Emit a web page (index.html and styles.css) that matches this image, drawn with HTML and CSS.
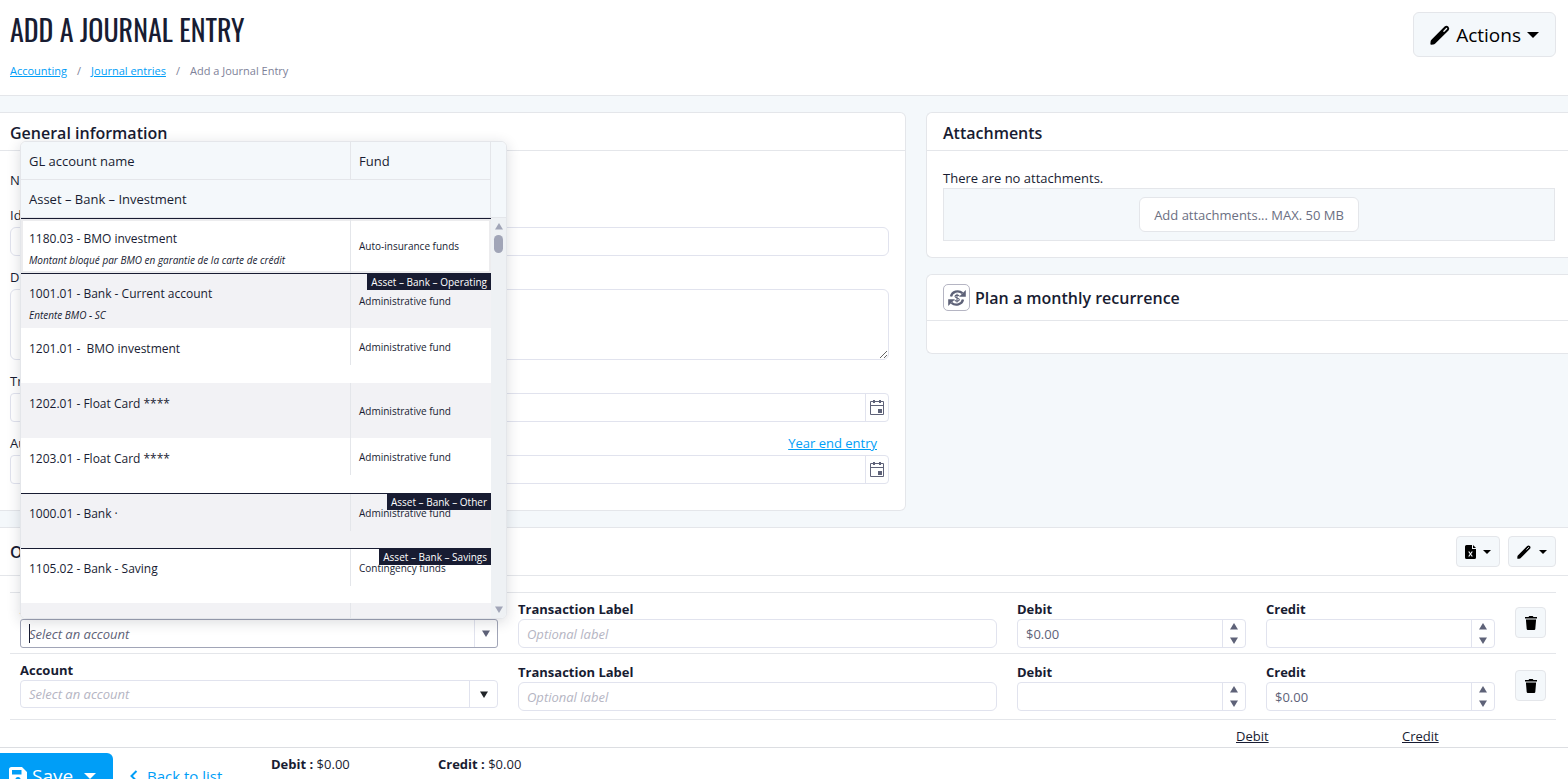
FILE: index.html
```html
<!DOCTYPE html>
<html lang="en">
<head>
<meta charset="utf-8">
<title>Add a Journal Entry</title>
<link rel="stylesheet" href="styles.css">
</head>
<body>
<svg class="sprite" aria-hidden="true">
  <symbol id="i-pen" viewBox="0 0 20 20"><path d="M1.200 15 14.600 1.600Q16.500 0 18.200 1.500L18.600 1.900Q20 3.600 18.500 5.400L5 18.800Q4.300 19.500 3.300 19.500L1.200 19.700Q.300 19.700.400 18.800L.600 16.500Q.600 15.700 1.200 15Z" fill="currentColor"/><path d="M13.900 6.200 16.600 3.500" stroke="#f4f8fb" stroke-width="1.300" stroke-linecap="round"/></symbol>
  <symbol id="i-down" viewBox="0 0 12 6"><path d="M0 0h12L6 6z" fill="currentColor"/></symbol>
  <symbol id="i-tri-down" viewBox="0 0 8 7"><path d="M0 .500h8L4 7z" fill="currentColor"/></symbol>
  <symbol id="i-tri-up" viewBox="0 0 8 7"><path d="M0 6.500h8L4 0z" fill="currentColor"/></symbol>
  <symbol id="i-trash" viewBox="0 0 12 14"><path d="M0 1h3.5L4.3 0h3.4l.8 1H12v1.5H0zM.9 3.4h10.2l-.8 9.6q-.1 1-1.100 1H2.800q-1 0-1.100-1z" fill="currentColor"/></symbol>
  <symbol id="i-cal" viewBox="0 0 16 16"><path d="M1.500 1.500h13v13h-13zM1.500 5.500h13" fill="none" stroke="currentColor"/><path d="M4 0h2v3H4zM10 0h2v3h-2zM9 9h4v4H9z" fill="currentColor"/></symbol>
  <symbol id="i-file" viewBox="0 0 11 14"><path d="M1.500 0H7v4h4v8.500q0 1.500-1.500 1.500h-8Q0 14 0 12.500v-11Q0 0 1.500 0z" fill="currentColor"/><path d="M8 0v3h3z" fill="currentColor"/><path d="m3.700 6.500 3.600 5M7.300 6.500l-3.600 5" stroke="#f4f8fb" stroke-width="1.200"/></symbol>
  <symbol id="i-save" viewBox="0 0 18 18"><path fill-rule="evenodd" d="M2.500 0H13l5 5v10.500q0 2.500-2.500 2.500h-13Q0 18 0 15.500v-13Q0 0 2.500 0zM3 3v4.500h9.500V3zM9 10a2.600 2.600 0 1 0 .01 0z" fill="currentColor"/></symbol>
  <symbol id="i-cycle" viewBox="0 0 18 18"><path d="M3 7.500C4 2.500 10.500.800 14.500 4.200M15 10.500c-1 5-7.500 6.700-11.500 3.300" fill="none" stroke="currentColor" stroke-width="2.300"/><path d="M17.800 1v6.700H11zM.200 17v-6.700H7z" fill="currentColor"/><path d="M11.300 7C10.200 5.700 7 5.800 7 7.500s4.300 1.200 4.300 3.100-3.200 2-4.600.5M9 4.700v8.700" fill="none" stroke="currentColor" stroke-width="1.100"/></symbol>
</svg>

<header class="page-head">
  <div>
    <h1 class="title">ADD A JOURNAL ENTRY</h1>
    <nav class="crumbs" aria-label="Breadcrumb">
      <a href="#">Accounting</a><span>/</span><a href="#">Journal entries</a><span>/</span><span>Add a Journal Entry</span>
    </nav>
  </div>
  <button class="btn btn-large" type="button"><svg class="ic20"><use href="#i-pen"/></svg>Actions<svg class="caret-lg"><use href="#i-down"/></svg></button>
</header>

<main>
  <div class="columns">
    <section class="card card-left">
      <h2 class="card-title">General information</h2>
      <div class="card-body form">
        <p class="line">Number</p>
        <div class="field"><label for="ident">Identifier</label><input class="box" id="ident" type="text"></div>
        <div class="field"><label for="desc">Description</label><textarea class="box area" id="desc"></textarea></div>
        <div class="field"><label for="tdate">Transaction date</label>
          <div class="box group"><input id="tdate" type="text"><button type="button" aria-label="Open calendar"><svg class="ic16"><use href="#i-cal"/></svg></button></div></div>
        <div class="field"><div class="label-row"><label for="adate">Authorization date</label><a href="#">Year end entry</a></div>
          <div class="box group"><input id="adate" type="text"><button type="button" aria-label="Open calendar"><svg class="ic16"><use href="#i-cal"/></svg></button></div></div>
      </div>
    </section>
    <div class="side">
      <section class="card card-right">
        <h2 class="card-title">Attachments</h2>
        <div class="card-body attach">
          <p class="line">There are no attachments.</p>
          <div class="drop"><button class="upload" type="button">Add attachments... MAX. 50 MB</button></div>
        </div>
      </section>
      <section class="card card-right">
        <h2 class="card-title tall"><button class="cycle" type="button" aria-label="Toggle recurrence"><svg class="ic18"><use href="#i-cycle"/></svg></button>Plan a monthly recurrence</h2>
        <div class="empty"></div>
      </section>
    </div>
  </div>

  <section class="ops">
    <div class="ops-head">
      <h2>Operations</h2>
      <div class="tools">
        <button class="btn btn-small" type="button" aria-label="Export"><svg class="ic-file"><use href="#i-file"/></svg><svg class="caret-sm"><use href="#i-down"/></svg></button>
        <button class="btn btn-small" type="button" aria-label="Edit"><svg class="ic14"><use href="#i-pen"/></svg><svg class="caret-sm wide"><use href="#i-down"/></svg></button>
      </div>
    </div>
    <div class="entries">
      <div class="entry">
        <div class="field account">
          <label for="acc1">Account</label>
          <div class="box group focused"><input id="acc1" type="text" placeholder="Select an account"><button type="button" aria-label="Show accounts"><svg class="tri"><use href="#i-tri-down"/></svg></button><span class="text-caret"></span></div>
          <div class="popup">
            <div class="popup-head">
              <div class="head-cells">
                <div class="head-row"><span>GL account name</span><span>Fund</span></div>
                <div class="head-group">Asset – Bank – Investment</div>
              </div>
            </div>
            <div class="popup-body">
              <ul class="options">
                <li class="opt start active"><div class="name">1180.03 - BMO investment<em>Montant bloqué par BMO en garantie de la carte de crédit</em></div><div class="fund">Auto-insurance funds</div></li>
                <li class="opt start alt"><div class="name">1001.01 - Bank - Current account<em>Entente BMO - SC</em></div><div class="fund">Administrative fund</div><b class="tag">Asset – Bank – Operating</b></li>
                <li class="opt"><div class="name">1201.01 -&nbsp; BMO investment</div><div class="fund short">Administrative fund</div></li>
                <li class="opt alt"><div class="name">1202.01 - Float Card ****</div><div class="fund">Administrative fund</div></li>
                <li class="opt"><div class="name">1203.01 - Float Card ****</div><div class="fund short">Administrative fund</div></li>
                <li class="opt start alt"><div class="name">1000.01 - Bank ·</div><div class="fund short">Administrative fund</div><b class="tag">Asset – Bank – Other</b></li>
                <li class="opt start"><div class="name">1105.02 - Bank - Saving</div><div class="fund short">Contingency funds</div><b class="tag">Asset – Bank – Savings</b></li>
                <li class="opt alt"><div class="name"></div><div class="fund"></div></li>
              </ul>
              <div class="scrollbar"><svg class="tri"><use href="#i-tri-up"/></svg><span class="thumb"></span><svg class="tri last"><use href="#i-tri-down"/></svg></div>
            </div>
          </div>
        </div>
        <div class="field"><label for="lab1">Transaction Label</label><input class="box" id="lab1" type="text" placeholder="Optional label"></div>
        <div class="field"><label for="deb1">Debit</label><div class="box group"><input id="deb1" type="text" value="$0.00"><div class="spin"><button type="button" aria-label="Increase"><svg class="tri"><use href="#i-tri-up"/></svg></button><button type="button" aria-label="Decrease"><svg class="tri"><use href="#i-tri-down"/></svg></button></div></div></div>
        <div class="field"><label for="cre1">Credit</label><div class="box group"><input id="cre1" type="text"><div class="spin"><button type="button" aria-label="Increase"><svg class="tri"><use href="#i-tri-up"/></svg></button><button type="button" aria-label="Decrease"><svg class="tri"><use href="#i-tri-down"/></svg></button></div></div></div>
        <button class="btn trash" type="button" aria-label="Delete line"><svg class="ic-trash"><use href="#i-trash"/></svg></button>
      </div>
      <div class="entry second">
        <div class="field account">
          <label for="acc2">Account</label>
          <div class="box group plain"><input id="acc2" type="text" placeholder="Select an account"><button type="button" aria-label="Show accounts"><svg class="tri"><use href="#i-tri-down"/></svg></button></div>
        </div>
        <div class="field"><label for="lab2">Transaction Label</label><input class="box" id="lab2" type="text" placeholder="Optional label"></div>
        <div class="field"><label for="deb2">Debit</label><div class="box group"><input id="deb2" type="text"><div class="spin"><button type="button" aria-label="Increase"><svg class="tri"><use href="#i-tri-up"/></svg></button><button type="button" aria-label="Decrease"><svg class="tri"><use href="#i-tri-down"/></svg></button></div></div></div>
        <div class="field"><label for="cre2">Credit</label><div class="box group"><input id="cre2" type="text" value="$0.00"><div class="spin"><button type="button" aria-label="Increase"><svg class="tri"><use href="#i-tri-up"/></svg></button><button type="button" aria-label="Decrease"><svg class="tri"><use href="#i-tri-down"/></svg></button></div></div></div>
        <button class="btn trash" type="button" aria-label="Delete line"><svg class="ic-trash"><use href="#i-trash"/></svg></button>
      </div>
      <div class="totals-head"><u>Debit</u><u>Credit</u></div>
    </div>
  </section>
</main>

<footer class="bar">
  <button class="save" type="button"><svg class="ic18"><use href="#i-save"/></svg>Save<svg class="caret-lg"><use href="#i-down"/></svg></button>
  <a class="back" href="#"><svg class="chev" viewBox="0 0 8 12"><path d="M6.500 1 1.500 6l5 5" fill="none" stroke="currentColor" stroke-width="2"/></svg>Back to list</a>
  <p class="sum"><b>Debit :</b> $0.00</p>
  <p class="sum"><b>Credit :</b> $0.00</p>
</footer>
</body>
</html>
```
FILE: styles.css
```css
* { box-sizing: border-box; }
html, body { height: 100%; overflow: hidden; }
body {
  margin: 0;
  background: #f4f8fb;
  color: #181c32;
  font: 13px/20px "Open Sans", "Noto Sans", sans-serif;
}
h1, h2, p, ul { margin: 0; padding: 0; }
button, input, textarea { font: inherit; color: inherit; }
button { cursor: pointer; padding: 0; }
svg { display: block; flex: none; }
a { color: #009ef7; }
.sprite { position: absolute; width: 0; height: 0; }

.ic20 { width: 20px; height: 20px; }
.ic18 { width: 18px; height: 18px; }
.ic16 { width: 16px; height: 16px; }
.ic14 { width: 14px; height: 14px; }
.ic-file { width: 11px; height: 14px; }
.ic-trash { width: 12px; height: 14px; }
.caret-lg { width: 12px; height: 6px; }
.caret-sm { width: 8px; height: 4px; }
.tri { width: 8px; height: 7px; }

/* page header */
.page-head {
  display: flex;
  justify-content: space-between;
  align-items: flex-start;
  padding: 12px 12px 14px 10px;
  background: #fff;
  border-bottom: 1px solid #e4e6ea;
}
.title {
  font: 400 28px/36px Oswald, "Open Sans Condensed", "Noto Sans ExtraCondensed", "Roboto Condensed", "Liberation Sans Narrow", "Open Sans", sans-serif;
}
.crumbs {
  display: flex;
  gap: 10px;
  margin-top: 12px;
  font-size: 11px;
  line-height: 21px;
  color: #7e8299;
}
.btn {
  display: flex;
  align-items: center;
  justify-content: center;
  background: #f4f8fb;
  border: 1px solid #e4e6ea;
  border-radius: 4px;
  color: #000;
}
.btn-large { gap: 6px; height: 45px; padding: 0 16px; font-size: 19px; border-radius: 6px; }

/* cards */
.columns {
  display: grid;
  grid-template-columns: 906fr 642fr;
  gap: 20px;
  padding: 16px 0;
}
.card { background: #fff; border: 1px solid #e4e6ea; border-radius: 6px; }
.card-left { border-left: 0; border-radius: 0 6px 6px 0; }
.card-right { border-right: 0; border-radius: 6px 0 0 6px; }
.card-title {
  display: flex;
  align-items: center;
  gap: 5px;
  height: 38px;
  padding: 2px 16px 0;
  border-bottom: 1px solid #e4e6ea;
  font-size: 16px;
  font-weight: 600;
}
.card-left .card-title { padding: 2px 10px 0; }
.card-title.tall { height: 46px; padding-top: 0; }
.side { display: flex; flex-direction: column; gap: 16px; }
.form { display: flex; flex-direction: column; gap: 11px; padding: 19px 16px 26px 10px; }
.form > .line { margin-bottom: 4px; }
.field { display: flex; flex-direction: column; gap: 2px; }
.label-row { display: flex; justify-content: space-between; padding-right: 12px; }
.box {
  width: 100%;
  height: 29px;
  padding: 0 8px;
  background: #fff;
  border: 1px solid #e1e3ee;
  border-radius: 6px;
  outline: 0;
}
.area { display: block; height: 71px; resize: vertical; }
.group { position: relative; display: flex; padding: 0; border-radius: 4px; overflow: hidden; }
.group input { flex: 1; min-width: 0; border: 0; padding: 0 8px; background: none; outline: 0; color: #5e6278; }
.group button {
  display: flex;
  align-items: center;
  justify-content: center;
  width: 23px;
  border: 0;
  border-left: 1px solid #e1e3ee;
  background: none;
  color: #5e6278;
}
::placeholder { color: #b5b5c3; font-style: italic; opacity: 1; }

.attach { padding: 17px 13px 16px 16px; }
.drop {
  display: flex;
  justify-content: center;
  padding: 8px;
  background: #f4f8fb;
  border: 1px solid #e4e6ea;
}
.upload { height: 35px; padding: 0 14px; background: #fff; border: 1px solid #e4e6ea; border-radius: 6px; color: #6b6f82; }
.cycle {
  display: flex;
  align-items: center;
  justify-content: center;
  width: 27px;
  height: 27px;
  background: #fff;
  border: 1px solid #b5b5c3;
  border-radius: 5px;
  color: #5e6278;
}
.empty { height: 32px; }

/* operations */
.ops { background: #fff; border-top: 1px solid #e4e6ea; }
.ops-head {
  display: flex;
  align-items: center;
  justify-content: space-between;
  height: 48px;
  padding: 0 12px 0 10px;
  border-bottom: 1px solid #e4e6ea;
}
.ops-head h2 { font-size: 16px; font-weight: 600; }
.tools { display: flex; gap: 8px; }
.btn-small { gap: 7px; height: 31px; padding: 0 8px; }
.wide { margin-left: 1px; }
.entries { margin: 16px 12px 0 10px; }
.entry {
  display: grid;
  grid-template-columns: 478fr 479fr 229fr 229fr 31px;
  gap: 20px;
  padding: 6px 10px 5px;
  border-top: 1px solid #e4e6ea;
}
.entry.second { padding: 8px 10px; border-bottom: 1px solid #e4e6ea; }
.entry .field { gap: 0; }
.entry label { font-weight: 700; }
.account { position: relative; }
.focused { border-color: #a1a5b7; border-radius: 3px; }
.focused ::placeholder { color: #5e6278; }
.text-caret { position: absolute; left: 8px; top: 4px; width: 1px; height: 19px; background: #181c32; }
.second .account { margin-top: -2px; }
.plain { height: 28px; }
.group.plain button { width: 28px; color: #212529; }
.spin { display: flex; flex-direction: column; width: 23px; border-left: 1px solid #e1e3ee; }
.group .spin button { flex: 1; width: 100%; border: 0; }
.trash { width: 31px; height: 31px; margin-top: 8px; }
.totals-head { display: grid; grid-template-columns: 1fr 166px 154px; height: 27px; padding-top: 6px; }
.totals-head u { grid-column: 2; }
.totals-head u + u { grid-column: 3; }

/* account list */
.popup {
  position: absolute;
  z-index: 5;
  left: 0;
  bottom: 29px;
  width: 487px;
  height: 478px;
  display: flex;
  flex-direction: column;
  background: #fff;
  border: 1px solid #e4e6ea;
  border-radius: 6px;
  box-shadow: 0 3px 14px rgba(24, 28, 50, .16);
  overflow: hidden;
}
.popup-head { padding-right: 15px; background: #f4f8fb; border-bottom: 1px solid #e4e6ea; }
.head-cells { border-right: 1px solid #e4e6ea; }
.head-row { display: grid; grid-template-columns: 330px 1fr; border-bottom: 1px solid #e4e6ea; }
.head-row span { padding: 9px 8px; height: 37px; }
.head-row span + span { border-left: 1px solid #e4e6ea; margin-left: -1px; }
.head-group { padding: 9px 8px; height: 37px; }
.popup-body { display: flex; flex: 1; min-height: 0; }
.options { flex: 1; list-style: none; overflow: hidden; }
.opt {
  position: relative;
  display: grid;
  grid-template-columns: 329px 1fr;
  height: 55px;
}
.alt { background: #f2f2f5; }
.start { border-top: 1px solid #181c32; }
.active { box-shadow: inset 0 0 0 2px #ececee; }
.name { padding: 11px 8px 0; font-size: 12px; }
.start .name { padding-top: 10px; }
.name em { display: block; font-size: 10px; line-height: 22px; }
.fund { display: flex; align-items: center; padding-left: 8px; border-left: 1px solid #e4e6ea; font-size: 10px; }
.short { height: 37px; }
.tag {
  position: absolute;
  top: 0;
  right: 0;
  padding: 0 4px;
  background: #181c32;
  color: #fff;
  font-size: 10px;
  font-weight: 400;
  line-height: 16px;
}
.scrollbar { display: flex; flex-direction: column; align-items: center; gap: 5px; width: 15px; padding: 5px 0; background: #eef1f4; color: #a1a5b7; }
.thumb { width: 9px; height: 18px; border-radius: 5px; background: #a1a5b7; }
.last { margin-top: auto; }

/* action bar */
.bar { display: flex; align-items: flex-start; padding-top: 5px; background: #fff; border-top: 1px solid #dcdee2; }
.save {
  display: flex;
  align-items: center;
  gap: 5px;
  width: 113px;
  height: 46px;
  padding-left: 9px;
  background: #009ef7;
  border: 0;
  border-radius: 0 6px 6px 0;
  color: #fff;
  font-size: 19px;
}
.save .caret-lg { margin-left: 6px; }
.back { display: flex; align-items: center; gap: 9px; width: 141px; height: 46px; margin-left: 17px; font-size: 15px; text-decoration: none; }
.chev { width: 8px; height: 12px; }
.sum { width: 167px; padding-top: 1px; }
.sum b { font-weight: 700; }
```
